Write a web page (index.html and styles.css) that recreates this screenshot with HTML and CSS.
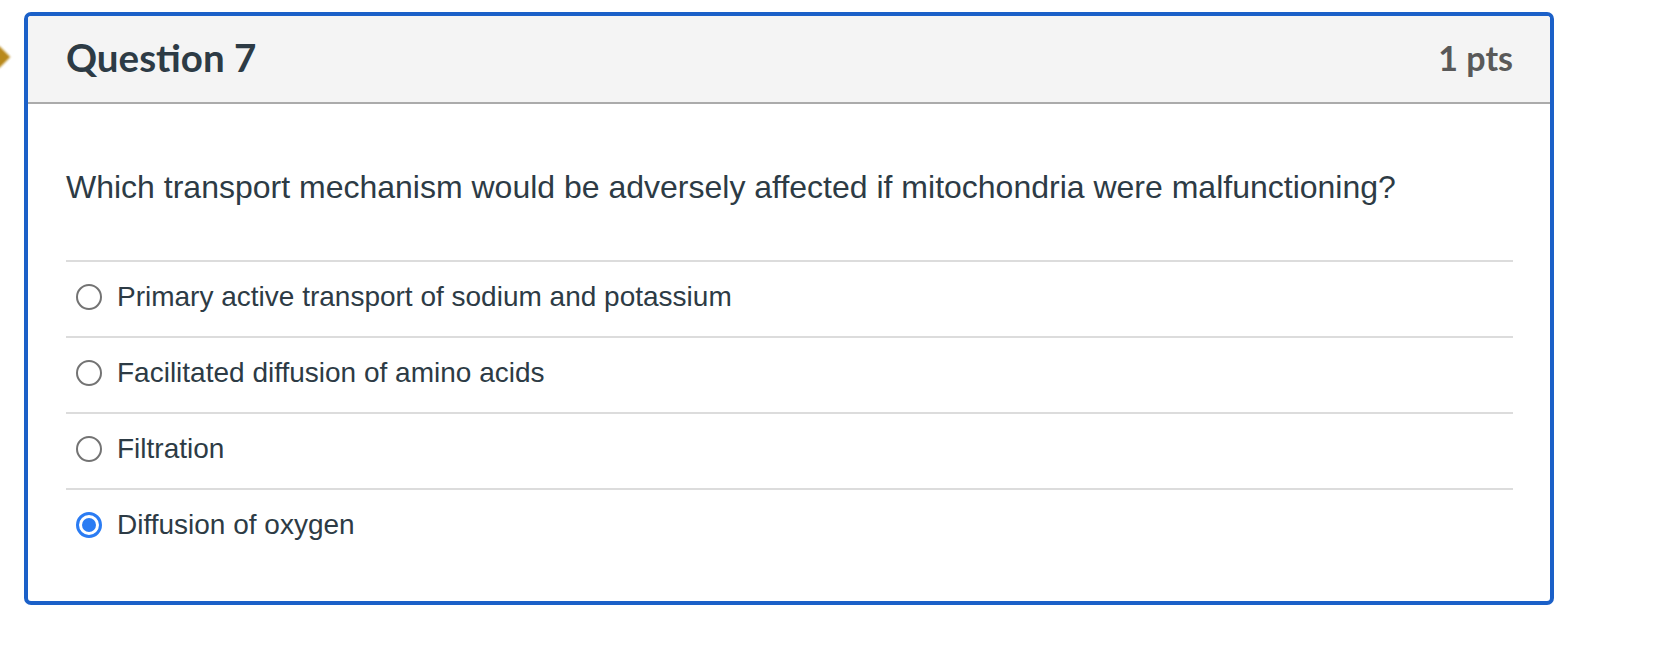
FILE: index.html
```html
<!DOCTYPE html>
<html lang="en">
<head>
<meta charset="utf-8">
<title>Question 7</title>
<link rel="stylesheet" href="styles.css">
</head>
<body>
<div class="page">
  <span class="flag-marker" aria-hidden="true"></span>
  <section class="question">
    <header class="q-header">
      <h2 class="q-title">Question 7</h2>
      <span class="q-points">1 pts</span>
    </header>
    <div class="q-body">
      <p class="q-text">Which transport mechanism would be adversely affected if mitochondria were malfunctioning?</p>
      <ul class="answers">
        <li class="answer"><span class="radio"></span><span class="answer-label">Primary active transport of sodium and potassium</span></li>
        <li class="answer"><span class="radio"></span><span class="answer-label">Facilitated diffusion of amino acids</span></li>
        <li class="answer"><span class="radio"></span><span class="answer-label">Filtration</span></li>
        <li class="answer"><span class="radio checked"></span><span class="answer-label">Diffusion of oxygen</span></li>
      </ul>
    </div>
  </section>
</div>
</body>
</html>
```

FILE: styles.css
```css
html, body {
  margin: 0;
  padding: 0;
  background: #ffffff;
}

.page {
  position: relative;
  padding: 12px 0 0 24px;
}

.flag-marker {
  position: absolute;
  left: -9px;
  top: 49px;
  width: 16px;
  height: 16px;
  background: #b8891c;
  transform: rotate(45deg);
  filter: blur(0.8px);
}

.question {
  width: 1530px;
  box-sizing: border-box;
  border: 4px solid #1b60c8;
  border-radius: 7px;
  overflow: hidden;
  background: #ffffff;
}

.q-header {
  display: flex;
  align-items: center;
  justify-content: space-between;
  box-sizing: border-box;
  height: 88px;
  padding: 0 37px 4px 38px;
  background: #f4f4f4;
  border-bottom: 2px solid #ababab;
}

.q-title {
  margin: 0;
  font-family: "Lato", "Liberation Sans", sans-serif;
  font-weight: 700;
  font-size: 38.5px;
  color: #2d3b45;
}

.q-points {
  font-family: "Lato", "Liberation Sans", sans-serif;
  font-weight: 700;
  font-size: 34px;
  color: #595959;
}

.q-body {
  padding: 0 37px 37px 38px;
}

.q-text {
  margin: 0 0 53px 0;
  padding-top: 63px;
  font-family: "Liberation Sans", Arial, sans-serif;
  font-size: 32px;
  line-height: 40px;
  color: #2d3b45;
}

.answers {
  list-style: none;
  margin: 0;
  padding: 0;
}

.answer {
  display: flex;
  align-items: center;
  gap: 15px;
  box-sizing: border-box;
  height: 76px;
  padding: 0 0 4px 10px;
  border-top: 2px solid #dcdcdc;
  font-family: "Liberation Sans", Arial, sans-serif;
  font-size: 28px;
  color: #2d3b45;
}

.answer-label {
  line-height: 32px;
}

.radio {
  flex: none;
  width: 26px;
  height: 26px;
  box-sizing: border-box;
  border: 2.5px solid #737373;
  border-radius: 50%;
  background: #ffffff;
  position: relative;
}

.radio.checked {
  border: 3px solid #2b7cf3;
}

.radio.checked::after {
  content: "";
  position: absolute;
  left: 3px;
  top: 3px;
  width: 14px;
  height: 14px;
  border-radius: 50%;
  background: #2b7cf3;
}
```
